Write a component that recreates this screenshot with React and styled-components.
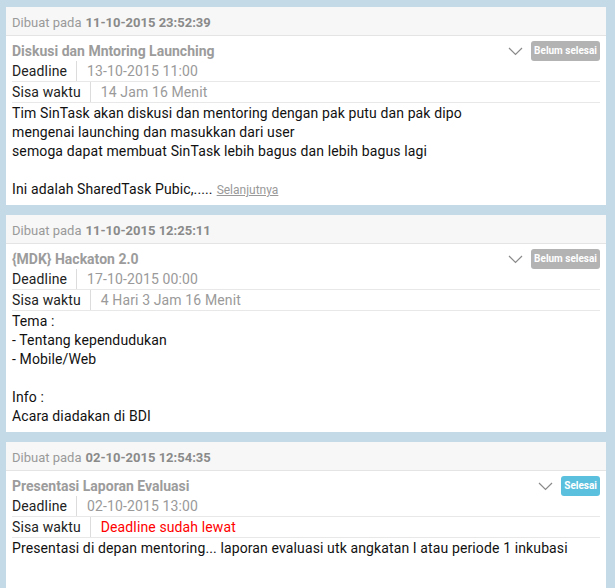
import React from "react";
import styled, { createGlobalStyle } from "styled-components";

const GlobalStyle = createGlobalStyle`
  html, body {
    margin: 0;
    padding: 0;
    background: #c5dae7;
  }
  body {
    font-family: Roboto, "Liberation Sans", Arial, sans-serif;
  }
`;

const Page = styled.div`
  padding: 7px 9px 0 6px;
  height: 588px;
  overflow: hidden;
  box-sizing: border-box;
`;

const Card = styled.div`
  background: #fff;
  margin-bottom: 10px;
`;

const Header = styled.div`
  height: 29px;
  box-sizing: border-box;
  display: flex;
  align-items: center;
  padding: 2px 6px 0;
  background: #f7f7f7;
  border-bottom: 1px solid #e4e4e4;
  font-size: 13px;
  color: #9a9a9a;

  b {
    color: #8a8a8a;
    margin-left: 4px;
  }
`;

const Body = styled.div`
  padding: 5px 6px 6px;
`;

const TitleRow = styled.div`
  display: flex;
  align-items: center;
  justify-content: space-between;
  height: 20px;
`;

const Title = styled.div`
  font-size: 14px;
  font-weight: bold;
  color: #9c9c9c;
`;

const Actions = styled.div`
  display: flex;
  align-items: center;
  gap: 8px;
`;

const Badge = styled.span`
  display: inline-block;
  font-size: 10px;
  font-weight: bold;
  color: #fff;
  background: ${(p) => (p.$done ? "#5bc0de" : "#b3b3b3")};
  border-radius: 3px;
  padding: 0 3px;
  height: 20px;
  line-height: 20px;
`;

const Row = styled.div`
  display: flex;
  height: 20px;
  align-items: stretch;
  border-bottom: 1px solid #e8e8e8;
  font-size: 14px;
  letter-spacing: 0.12px;
`;

const Label = styled.div`
  color: #222;
  padding-right: 9px;
  border-right: 1px solid #dcdcdc;
  line-height: 20px;
`;

const Value = styled.div`
  color: ${(p) => (p.$late ? "#ff0000" : "#9a9a9a")};
  padding-left: 10px;
  line-height: 20px;
`;

const Desc = styled.div`
  padding-top: 1px;
  font-size: 14px;
  letter-spacing: 0.12px;
  color: #111;
`;

const Line = styled.div`
  height: 19px;
  line-height: 19px;
  white-space: nowrap;
`;

const More = styled.a`
  font-size: 12px;
  letter-spacing: 0;
  color: #999;
  text-decoration: underline;
  margin-left: 4px;
`;

const Chevron = () => (
  <svg width="15" height="9" viewBox="0 0 15 9">
    <path d="M1 1 L7.5 7.5 L14 1" fill="none" stroke="#8a8a8a" strokeWidth="1.2" />
  </svg>
);

const tasks = [
  {
    created: "11-10-2015 23:52:39",
    title: "Diskusi dan Mntoring Launching",
    deadline: "13-10-2015 11:00",
    remaining: "14 Jam 16 Menit",
    done: false,
    lines: [
      "Tim SinTask akan diskusi dan mentoring dengan pak putu dan pak dipo",
      "mengenai launching dan masukkan dari user",
      "semoga dapat membuat SinTask lebih bagus dan lebih bagus lagi",
      "",
      "Ini adalah SharedTask Pubic,.....",
    ],
    more: true,
  },
  {
    created: "11-10-2015 12:25:11",
    title: "{MDK} Hackaton 2.0",
    deadline: "17-10-2015 00:00",
    remaining: "4 Hari 3 Jam 16 Menit",
    done: false,
    lines: ["Tema :", "- Tentang kependudukan", "- Mobile/Web", "", "Info :", "Acara diadakan di BDI"],
  },
  {
    created: "02-10-2015 12:54:35",
    title: "Presentasi Laporan Evaluasi",
    deadline: "02-10-2015 13:00",
    remaining: "Deadline sudah lewat",
    late: true,
    done: true,
    lines: [
      "Presentasi di depan mentoring... laporan evaluasi utk angkatan I atau periode 1 inkubasi",
      "",
      "",
    ],
  },
];

const TaskCard = ({ task }) => (
  <Card>
    <Header>
      Dibuat pada<b>{task.created}</b>
    </Header>
    <Body>
      <TitleRow>
        <Title>{task.title}</Title>
        <Actions>
          <Chevron />
          <Badge $done={task.done}>{task.done ? "Selesai" : "Belum selesai"}</Badge>
        </Actions>
      </TitleRow>
      <Row>
        <Label>Deadline</Label>
        <Value>{task.deadline}</Value>
      </Row>
      <Row>
        <Label>Sisa waktu</Label>
        <Value $late={task.late}>{task.remaining}</Value>
      </Row>
      <Desc>
        {task.lines.map((l, i) => (
          <Line key={i}>
            {l}
            {task.more && i === task.lines.length - 1 && <More>Selanjutnya</More>}
          </Line>
        ))}
      </Desc>
    </Body>
  </Card>
);

const App = () => (
  <>
    <GlobalStyle />
    <Page>
      {tasks.map((t) => (
        <TaskCard key={t.created} task={t} />
      ))}
    </Page>
  </>
);

export default App;
